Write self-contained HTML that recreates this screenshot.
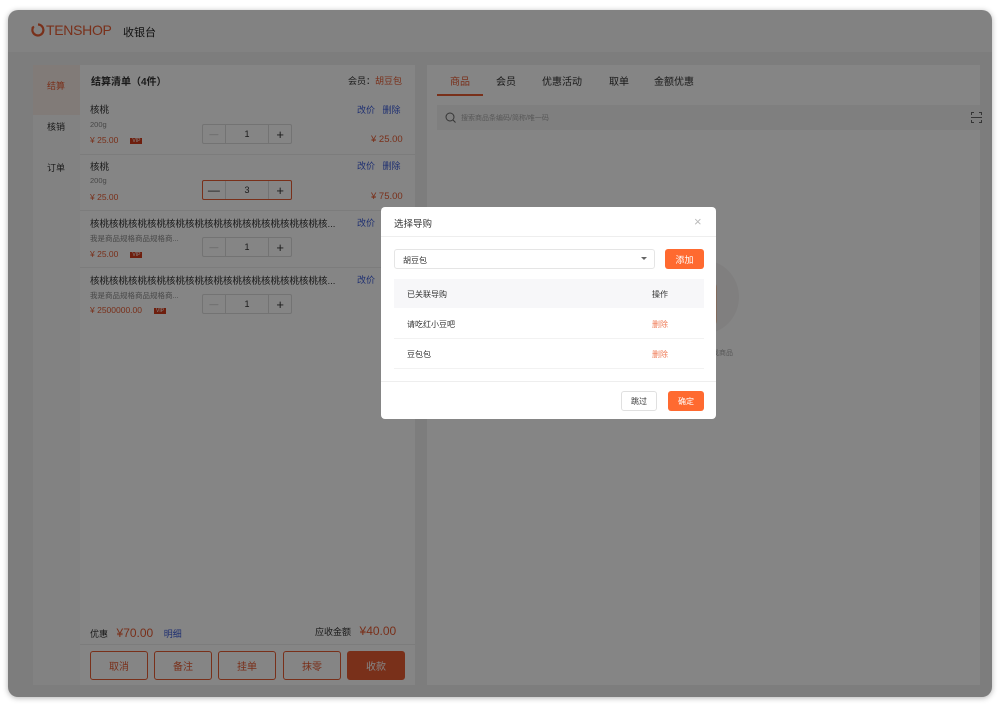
<!DOCTYPE html>
<html><head><meta charset="utf-8"><style>
*{box-sizing:border-box;margin:0;padding:0}
body{width:1000px;height:710px;background:#fff;font-family:"Liberation Sans","Noto Sans CJK SC",sans-serif;position:relative;overflow:hidden;font-size:9px;color:#333}
.win{position:absolute;left:8px;top:10px;width:984px;height:687px;border-radius:10px;background:#f0f0f0;overflow:hidden;box-shadow:0 1px 6px rgba(0,0,0,.3)}
.hdr{position:absolute;left:0;top:0;width:984px;height:42px;background:#fafafa}
.a{position:absolute;white-space:nowrap}
.panel{position:absolute;background:#fff}
.or{color:#e85c33}.bl{color:#3a5bd9}
.step{position:absolute;width:90px;height:20px;border:1px solid #ddd;border-radius:2px;display:flex}
.step div{display:flex;align-items:center;justify-content:center;font-size:9px}
.vip{display:inline-block;background:#d43a1a;color:#fff;font-size:5px;padding:0 2px;margin-left:12px;vertical-align:1px}
.ov{position:absolute;left:0;top:0;width:984px;height:687px;background:rgba(0,0,0,.48)}
.btn{position:absolute;height:29px;width:58px;border:1px solid #e85c33;border-radius:3px;color:#e85c33;font-size:10px;display:flex;align-items:center;justify-content:center}
.m{position:absolute;left:381px;top:207px;width:335px;height:212px;background:#fff;border-radius:4px}
</style></head><body>
<div class="win">
<div class="hdr">
<svg class="a" style="left:23px;top:13px" width="14" height="14" viewBox="0 0 14 14"><path d="M7 1.5A5.5 5.5 0 1 1 2 4.5" fill="none" stroke="#e85c33" stroke-width="2.2"/><path d="M1 5l2-1.5" stroke="#e85c33" stroke-width="2"/></svg>
<div class="a" style="left:38px;top:12px;font-size:14px;color:#e85c33;letter-spacing:-.3px">TENSHOP</div>
<div class="a" style="left:115px;top:14px;font-size:11px;color:#222">收银台</div>
</div>
<div class="panel" style="left:25px;top:55px;width:47px;height:620px;background:#fafafa"></div>
<div class="a" style="left:25px;top:55px;width:47px;height:50px;background:#f7ebe6"></div>
<div class="a or" style="left:39px;top:69px;font-size:9px">结算</div>
<div class="a" style="left:39px;top:110px;font-size:9px">核销</div>
<div class="a" style="left:39px;top:151px;font-size:9px">订单</div>
<div class="panel" style="left:72px;top:55px;width:335px;height:620px">
<div class="a" style="left:11px;top:8px;font-size:10px;font-weight:bold">结算清单（4件）</div>
<div class="a" style="left:268px;top:9px;font-size:9px">会员：<span class="or">胡豆包</span></div>
<div class="a" style="left:0;top:89px;width:335px;height:1px;background:#eee"></div>
<div class="a" style="left:0;top:145px;width:335px;height:1px;background:#eee"></div>
<div class="a" style="left:0;top:202px;width:335px;height:1px;background:#eee"></div>
</div>
<div class="a" style="left:82px;top:92px;font-size:9.5px">核桃</div>
<div class="a" style="left:82px;top:110px;font-size:7.5px;color:#888">200g</div>
<div class="a or" style="left:82px;top:125px;font-size:8.5px">¥ 25.00<span class="vip">VIP</span></div>
<div class="a bl" style="left:349px;top:93px;font-size:9px">改价 &nbsp; 删除</div>
<div class="a or" style="left:363px;top:124px;font-size:9.5px">¥ 25.00</div>
<div class="step" style="left:194px;top:114px"><div style="width:23px;border-right:1px solid #ddd;color:#bbb">—</div><div style="width:44px;border-right:1px solid #ddd">1</div><div style="width:22px;font-size:13px">+</div></div>

<div class="a" style="left:82px;top:149px;font-size:9.5px">核桃</div>
<div class="a" style="left:82px;top:166px;font-size:7.5px;color:#888">200g</div>
<div class="a or" style="left:82px;top:182px;font-size:8.5px">¥ 25.00</div>
<div class="a bl" style="left:349px;top:149px;font-size:9px">改价 &nbsp; 删除</div>
<div class="a or" style="left:363px;top:181px;font-size:9.5px">¥ 75.00</div>
<div class="step" style="left:194px;top:170px;border-color:#e85c33"><div style="width:23px;border-right:1px solid #ddd;font-size:12px">—</div><div style="width:44px;border-right:1px solid #ddd">3</div><div style="width:22px;font-size:13px">+</div></div>

<div class="a" style="left:82px;top:206px;font-size:9.5px">核桃核桃核桃核桃核桃核桃核桃核桃核桃核桃核桃核桃核...</div>
<div class="a" style="left:82px;top:223px;font-size:7.5px;color:#888">我是商品规格商品规格商...</div>
<div class="a or" style="left:82px;top:239px;font-size:8.5px">¥ 25.00<span class="vip">VIP</span></div>
<div class="a bl" style="left:349px;top:206px;font-size:9px">改价</div>
<div class="step" style="left:194px;top:227px"><div style="width:23px;border-right:1px solid #ddd;color:#bbb">—</div><div style="width:44px;border-right:1px solid #ddd">1</div><div style="width:22px;font-size:13px">+</div></div>

<div class="a" style="left:82px;top:263px;font-size:9.5px">核桃核桃核桃核桃核桃核桃核桃核桃核桃核桃核桃核桃核...</div>
<div class="a" style="left:82px;top:280px;font-size:7.5px;color:#888">我是商品规格商品规格商...</div>
<div class="a or" style="left:82px;top:295px;font-size:8.5px">¥ 2500000.00<span class="vip">VIP</span></div>
<div class="a bl" style="left:349px;top:263px;font-size:9px">改价</div>
<div class="step" style="left:194px;top:284px"><div style="width:23px;border-right:1px solid #ddd;color:#bbb">—</div><div style="width:44px;border-right:1px solid #ddd">1</div><div style="width:22px;font-size:13px">+</div></div>

<div class="a" style="left:82px;top:616px;font-size:9px">优惠 <span class="or" style="font-size:12px;margin-left:6px">¥70.00</span> <span class="bl" style="margin-left:8px">明细</span></div>
<div class="a" style="left:307px;top:614px;font-size:9px">应收金额 <span class="or" style="font-size:12px;margin-left:6px">¥40.00</span></div>
<div class="a" style="left:72px;top:634px;width:335px;height:1px;background:#eee"></div>
<div class="btn" style="left:82px;top:641px">取消</div>
<div class="btn" style="left:146px;top:641px">备注</div>
<div class="btn" style="left:210px;top:641px">挂单</div>
<div class="btn" style="left:275px;top:641px">抹零</div>
<div class="btn" style="left:339px;top:641px;background:#e85c33;color:#fff">收款</div>

<div class="panel" style="left:419px;top:55px;width:553px;height:620px">
<div class="a or" style="left:23px;top:8px;font-size:10px">商品</div>
<div class="a" style="left:10px;top:29px;width:46px;height:2px;background:#e85c33"></div>
<div class="a" style="left:69px;top:8px;font-size:10px">会员</div>
<div class="a" style="left:115px;top:8px;font-size:10px">优惠活动</div>
<div class="a" style="left:182px;top:8px;font-size:10px">取单</div>
<div class="a" style="left:227px;top:8px;font-size:10px">金额优惠</div>
<div class="a" style="left:10px;top:40px;width:543px;height:25px;background:#f3f3f3"></div>
<svg class="a" style="left:18px;top:47px" width="11" height="11" viewBox="0 0 11 11"><circle cx="5" cy="5" r="4" fill="none" stroke="#666" stroke-width="1"/><path d="M8 8l2.5 2.5" stroke="#666"/></svg>
<div class="a" style="left:34px;top:48px;font-size:7px;color:#aaa">搜索商品条编码/简称/唯一码</div>
<svg class="a" style="left:544px;top:47px" width="11" height="11" viewBox="0 0 11 11" fill="none" stroke="#666"><path d="M.5 3V.5H3M8 .5h2.5V3M10.5 8v2.5H8M3 10.5H.5V8M0 5.5h11"/></svg>
<div class="a" style="left:240px;top:195px;width:72px;height:74px;border-radius:50%;background:#f6f3f3"></div>
<div class="a" style="left:270px;top:215px;width:20px;height:48px;border-radius:8px;background:#f7cdb3"></div>
<div class="a" style="left:220px;top:283px;font-size:7px;color:#aaa">输入商品名称/条码查找商品</div>
</div>
<div class="ov"></div>
</div>

<div class="m">
<div class="a" style="left:13px;top:9px;font-size:9.5px;color:#333">选择导购</div>
<div class="a" style="left:313px;top:7px;font-size:13px;color:#bbb">×</div>
<div class="a" style="left:0;top:29px;width:335px;height:1px;background:#eee"></div>
<div class="a" style="left:13px;top:42px;width:261px;height:20px;border:1px solid #e5e5e5;border-radius:3px"></div>
<div class="a" style="left:22px;top:48px;font-size:8px">胡豆包</div>
<div class="a" style="left:260px;top:50px;width:0;height:0;border-left:3px solid transparent;border-right:3px solid transparent;border-top:3px solid #666"></div>
<div class="a" style="left:284px;top:42px;width:39px;height:20px;background:#ff6a30;border-radius:3px;color:#fff;font-size:9px;display:flex;align-items:center;justify-content:center">添加</div>
<div class="a" style="left:13px;top:72px;width:310px;height:29px;background:#f7f7f9"></div>
<div class="a" style="left:26px;top:82px;font-size:8px">已关联导购</div>
<div class="a" style="left:271px;top:82px;font-size:8px">操作</div>
<div class="a" style="left:26px;top:112px;font-size:8px">请吃红小豆吧</div>
<div class="a" style="left:271px;top:112px;font-size:8px;color:#ef7a55">删除</div>
<div class="a" style="left:13px;top:131px;width:310px;height:1px;background:#f2f2f2"></div>
<div class="a" style="left:26px;top:142px;font-size:8px">豆包包</div>
<div class="a" style="left:271px;top:142px;font-size:8px;color:#ef7a55">删除</div>
<div class="a" style="left:13px;top:161px;width:310px;height:1px;background:#f2f2f2"></div>
<div class="a" style="left:0;top:174px;width:335px;height:1px;background:#eee"></div>
<div class="a" style="left:240px;top:184px;width:36px;height:20px;border:1px solid #e0e0e0;border-radius:3px;font-size:8px;display:flex;align-items:center;justify-content:center">跳过</div>
<div class="a" style="left:287px;top:184px;width:36px;height:20px;background:#ff6a30;border-radius:3px;color:#fff;font-size:8px;display:flex;align-items:center;justify-content:center">确定</div>
</div>
</body></html>
